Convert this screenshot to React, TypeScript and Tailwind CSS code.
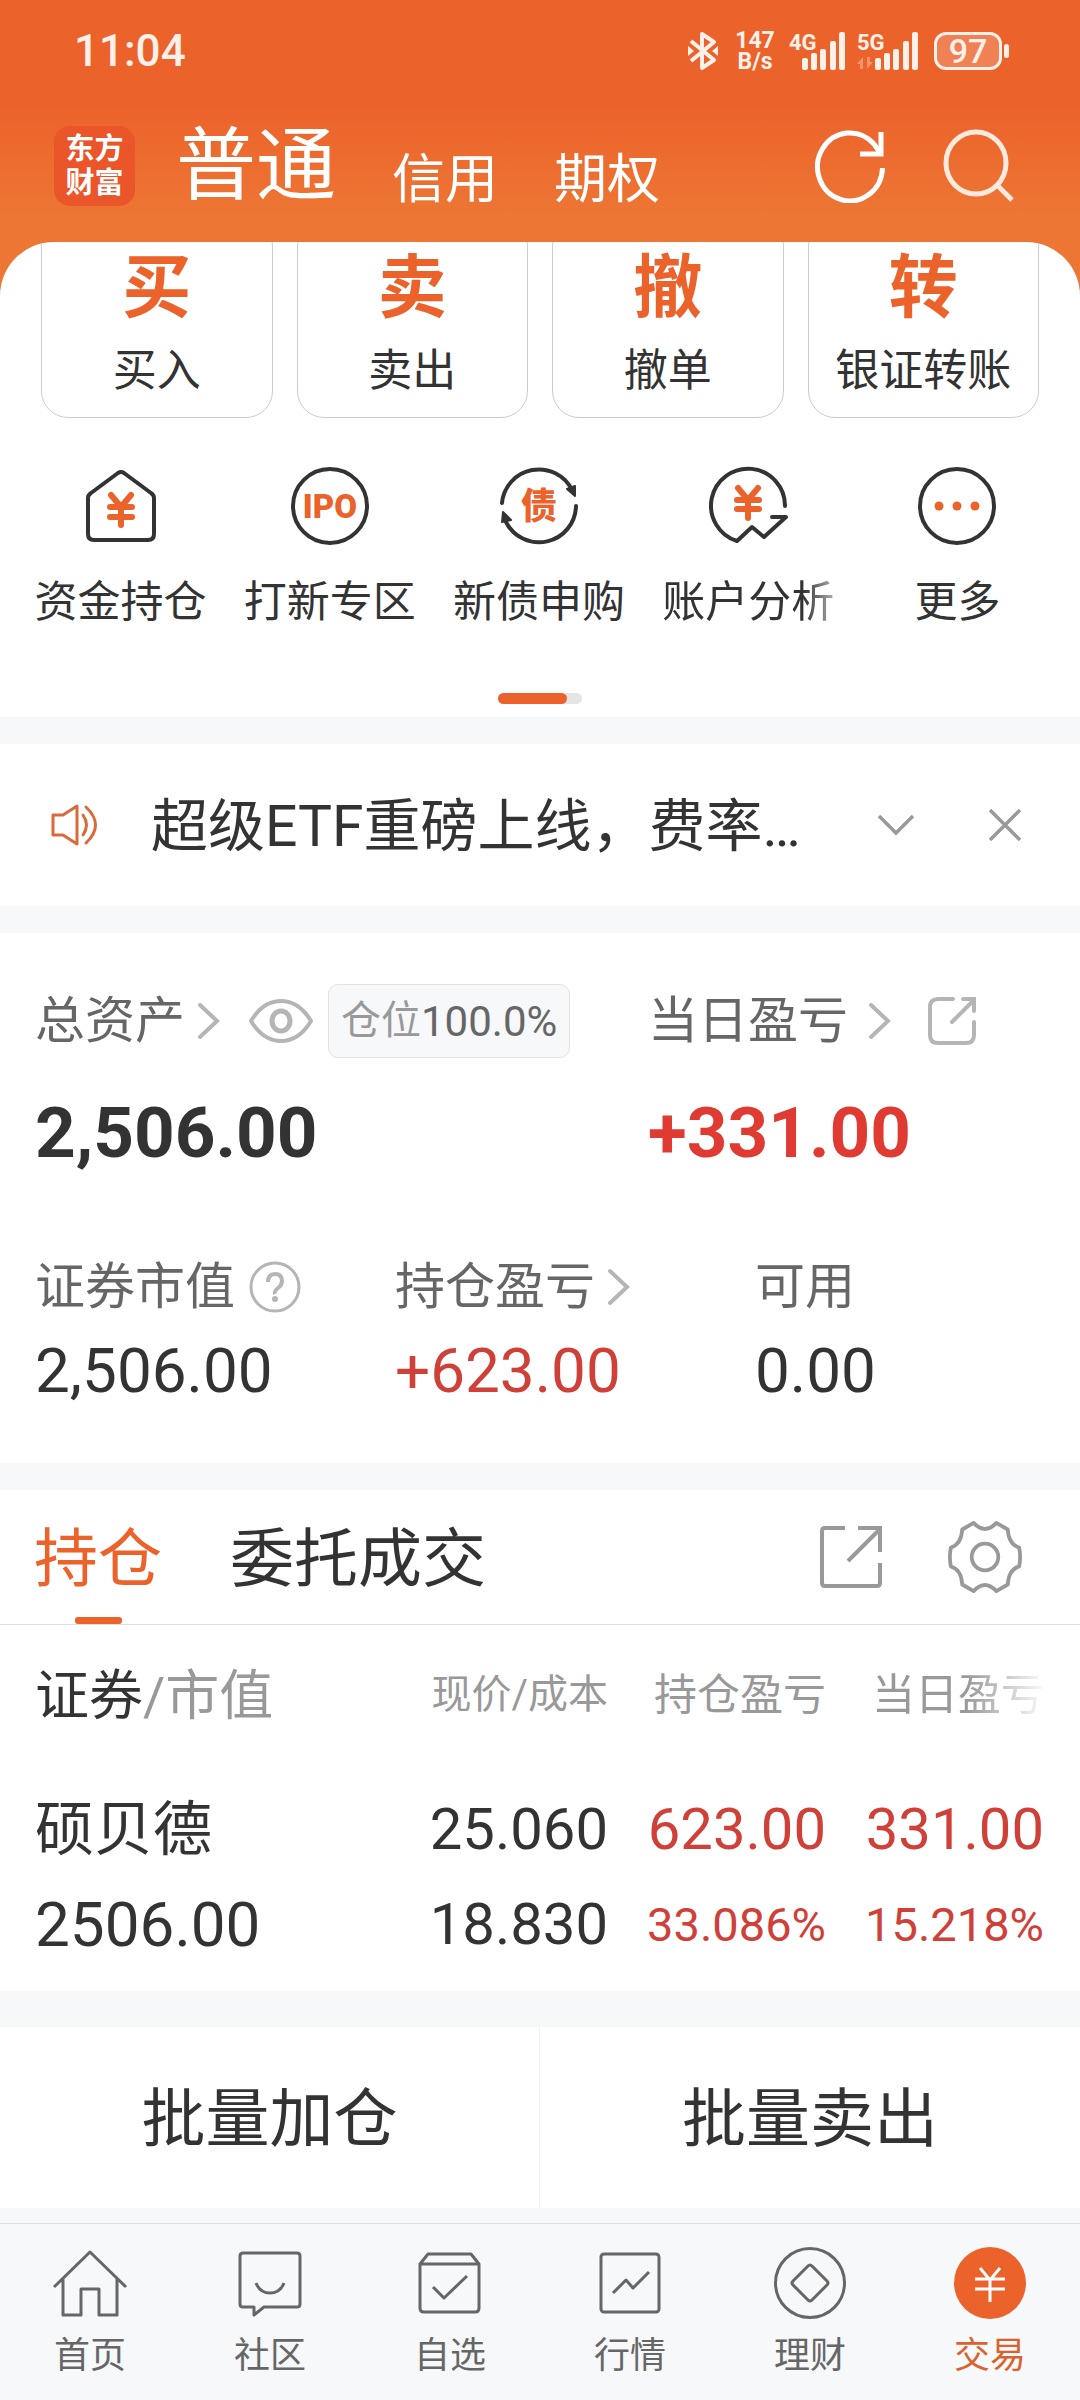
import { useState } from "react";
import type { ReactNode } from "react";
import clsx from "clsx";

const ORANGE = "#ec622b";

const barShapes = [
  { x: 0, y: 27 },
  { x: 9, y: 22 },
  { x: 18, y: 18 },
  { x: 28, y: 10 },
  { x: 37, y: 1 },
];

function SignalBars({ label, roaming }: { label: string; roaming?: boolean }) {
  const offset = roaming ? 18 : 13;

  return (
    <svg width="64" height="40" viewBox="0 0 64 40" fill="#fff1ea" className="overflow-visible" aria-hidden="true">
      <text x="0" y="19" fontSize="22" fontWeight="700">
        {label}
      </text>
      {roaming && (
        <g opacity="0.35">
          <path d="M0 33 6 26v12H3v-5z" />
          <path d="M16 31 10 38V26h3v5z" />
        </g>
      )}
      {barShapes.map((b) => (
        <rect key={b.x} x={offset + b.x} y={b.y} width="6" height={39 - b.y} rx="2" />
      ))}
    </svg>
  );
}

function StatusBar() {
  return (
    <div className="flex h-[102px] items-center justify-between pr-[71px] pl-[74px] text-[#fff1ea]">
      <span className="text-[44px] leading-none font-medium">11:04</span>
      <div className="flex items-center">
        <svg width="30" height="40" viewBox="0 0 30 40" fill="none" stroke="#fff1ea" strokeWidth="4" aria-hidden="true">
          <path d="M3 10 26 29 14 37V3l12 8L3 30" strokeLinejoin="round" />
          <path d="M0 15v10l6-5zM30 15v10l-6-5z" fill="#fff1ea" stroke="none" />
        </svg>
        <div className="ml-4 flex w-[42px] flex-col text-center text-[23px] leading-[21px] font-bold">
          <span>147</span>
          <span>B/s</span>
        </div>
        <div className="ml-[13px] flex gap-1">
          <SignalBars label="4G" />
          <SignalBars label="5G" roaming />
        </div>
        <div className="ml-[13px] flex items-center gap-[2px]">
          <span className="flex h-[38px] w-[68px] items-center justify-center rounded-[12px] border-[3px] border-[#fff1ea] bg-white/20 text-[34px] leading-none font-medium">
            97
          </span>
          <span className="h-[14px] w-[5px] rounded-full bg-[#fff1ea]" />
        </div>
      </div>
    </div>
  );
}

function Header() {
  return (
    <header className="bg-[linear-gradient(180deg,#ec622b_0px,#ec622b_105px,#ed7634_215px)] pb-[66px]">
      <StatusBar />
      <div className="flex h-[128px] items-center pr-[65px] pl-[54px] text-white">
        <div className="w-[81px] rounded-[16px] bg-[#ea5529] py-[6px] text-center text-[29px] leading-[34px] font-bold">
          <div>东方</div>
          <div>财富</div>
        </div>
        <div className="ml-[41px] flex items-end">
          <button className="text-[80px] leading-[100px]">普通</button>
          <button className="ml-[56px] text-[53px] leading-[72px]">信用</button>
          <button className="ml-[56px] text-[53px] leading-[72px]">期权</button>
        </div>
        <button aria-label="刷新" className="ml-auto">
          <svg width="72" height="74" viewBox="0 0 72 74" fill="none" stroke="currentColor" strokeWidth="5">
            <path d="M67.500 39A32.500 34 0 1 1 59 15L66 25" />
            <path d="M66 3v22H45" />
          </svg>
        </button>
        <button aria-label="搜索" className="ml-[56px] text-[#ffe9dc]">
          <svg width="72" height="74" viewBox="0 0 72 74" fill="none" stroke="currentColor" strokeWidth="5">
            <ellipse cx="33" cy="34" rx="30" ry="31" />
            <path d="M54 56 69 71" />
          </svg>
        </button>
      </div>
    </header>
  );
}

const actions = [
  { mark: "买", label: "买入" },
  { mark: "卖", label: "卖出" },
  { mark: "撤", label: "撤单" },
  { mark: "转", label: "银证转账" },
];

function QuickIcon({ children }: { children: ReactNode }) {
  return (
    <svg
      width="80"
      height="80"
      viewBox="0 0 80 80"
      fill="none"
      stroke="#333"
      strokeWidth="4"
      strokeLinecap="round"
      strokeLinejoin="round"
      aria-hidden="true"
    >
      {children}
    </svg>
  );
}

const shortcuts = [
  {
    label: "资金持仓",
    icon: (
      <QuickIcon>
        <path d="M37 7q3-2 6 0l27 20q3 2 3 5v36q0 6-6 6H13q-6 0-6-6V32q0-3 3-5z" />
        <path d="m30 29 10 12 10-12M29 41h22M29 51h22M40 41v18" stroke={ORANGE} strokeWidth="6" />
      </QuickIcon>
    ),
  },
  {
    label: "打新专区",
    icon: (
      <QuickIcon>
        <circle cx="40" cy="40" r="37" />
        <text x="40" y="52" textAnchor="middle" fontSize="33" fontWeight="900" fill={ORANGE} stroke="none">
          IPO
        </text>
      </QuickIcon>
    ),
  },
  {
    label: "新债申购",
    icon: (
      <QuickIcon>
        <path d="M3 37A37 37 0 0 1 73 24M77 40A37 37 0 0 1 7 56" />
        <path d="m68 23 8-3v10zM12 54l-9 2 1-10z" fill="#333" strokeWidth="2" />
        <text x="40" y="53" textAnchor="middle" fontSize="36" fontWeight="900" fill={ORANGE} stroke="none">
          债
        </text>
      </QuickIcon>
    ),
  },
  {
    label: "账户分析",
    fade: true,
    icon: (
      <QuickIcon>
        <path d="M77 40A37 37 0 1 0 29 75L44 61 56 71 78 51H64" />
        <path d="m30 22 10 12 10-12M29 34h22M29 43h22M40 34v18" stroke={ORANGE} strokeWidth="6" />
      </QuickIcon>
    ),
  },
  {
    label: "更多",
    icon: (
      <QuickIcon>
        <circle cx="40" cy="40" r="37" />
        <g fill={ORANGE} stroke="none">
          <circle cx="22" cy="40" r="4.500" />
          <circle cx="40" cy="40" r="4.500" />
          <circle cx="58" cy="40" r="4.500" />
        </g>
      </QuickIcon>
    ),
  },
];

function QuickActions() {
  return (
    <section className="-mt-[54px] overflow-hidden rounded-t-[54px] bg-white">
      <div className="grid grid-cols-4 gap-6 px-[41px]">
        {actions.map((a) => (
          <button
            key={a.label}
            className="-mt-[23px] flex flex-col items-center rounded-[27px] border border-[#ccc] pt-[23px] pb-[14px]"
          >
            <span className="text-[69px] leading-[92px] font-bold text-[#ec622b]">{a.mark}</span>
            <span className="pt-1 text-[44px] leading-[64px] text-[#333]">{a.label}</span>
          </button>
        ))}
      </div>
      <div className="mt-12 grid grid-cols-5 pr-[18px] pl-4">
        {shortcuts.map((s) => (
          <button key={s.label} className="flex flex-col items-center">
            {s.icon}
            <span
              className={clsx(
                "mt-[26px] text-[43px] leading-[60px] whitespace-nowrap text-[#333]",
                s.fade && "[mask-image:linear-gradient(90deg,#000_82%,rgba(0,0,0,0.4))]"
              )}
            >
              {s.label}
            </span>
          </button>
        ))}
      </div>
      <div className="mx-auto mt-[61px] mb-[13px] h-[11px] w-[84px] rounded-full bg-[#e5e5e5]">
        <div className="h-full w-[69px] rounded-full bg-[#ec622b]" />
      </div>
    </section>
  );
}

function Notice() {
  return (
    <section className="flex h-[162px] items-center bg-white pr-[59px] pl-[51px]">
      <svg
        width="48"
        height="42"
        viewBox="0 0 48 42"
        fill="none"
        stroke="#d96a3a"
        strokeWidth="3"
        strokeLinejoin="round"
        strokeLinecap="round"
        aria-hidden="true"
      >
        <path d="M2 11h10L26 2v38l-14-9H2z" />
        <path d="M32 11q7 10 0 20M35 3q19 18 0 36" />
      </svg>
      <p className="ml-[52px] flex-1 truncate pt-1 text-[57px] leading-[80px] text-[#333]">超级ETF重磅上线，费率…</p>
      <button aria-label="展开" className="text-[#999]">
        <svg width="38" height="24" viewBox="0 0 38 24" fill="none" stroke="currentColor" strokeWidth="3.500">
          <path d="m2 3 17 17L36 3" />
        </svg>
      </button>
      <button aria-label="关闭" className="ml-[74px] text-[#999]">
        <svg width="32" height="32" viewBox="0 0 32 32" fill="none" stroke="currentColor" strokeWidth="3.500">
          <path d="m1 1 30 30M31 1 1 31" />
        </svg>
      </button>
    </section>
  );
}

function Chevron() {
  return (
    <svg
      width="24"
      height="40"
      viewBox="0 0 24 40"
      fill="none"
      stroke="#b5b5b5"
      strokeWidth="4"
      strokeLinecap="round"
      aria-hidden="true"
    >
      <path d="m3 4 17 16L3 36" />
    </svg>
  );
}

function Assets() {
  return (
    <section className="bg-white pt-12 pb-14 text-[#333]">
      <div className="flex">
        <div className="w-3/5 pl-[35px]">
          <div className="flex h-[80px] items-center">
            <button className="flex items-center gap-[12px] text-[50px] leading-[70px] text-[#666]">
              总资产
              <Chevron />
            </button>
            <button aria-label="隐藏金额" className="ml-[28px]">
              <svg width="64" height="50" viewBox="0 0 64 50" fill="none" stroke="#b5b5b5" strokeWidth="4">
                <path d="M2 25Q14 5 32 5t30 20Q50 45 32 45T2 25z" strokeLinejoin="round" />
                <ellipse cx="32" cy="25" rx="9" ry="10" strokeWidth="5" />
              </svg>
            </button>
            <span className="ml-[15px] flex h-[74px] items-center rounded-[10px] border border-[#e2e2e4] bg-[#f7f8fa] px-[12px] text-[42px] text-[#666]">
              <span className="text-[40px] text-[#999]">仓位</span>100.0%
            </span>
          </div>
          <p className="pt-[28px] text-[71px] leading-[88px] font-bold">2,506.00</p>
        </div>
        <div>
          <div className="flex h-[80px] items-center">
            <button className="flex items-center gap-[20px] text-[50px] leading-[70px] text-[#666]">
              当日盈亏
              <Chevron />
            </button>
            <button aria-label="分享当日盈亏" className="ml-[36px]">
              <svg
                width="48"
                height="48"
                viewBox="0 0 48 48"
                fill="none"
                stroke="#b5b5b5"
                strokeWidth="4"
                strokeLinecap="round"
              >
                <path d="M25 2H10q-8 0-8 8v28q0 8 8 8h28q8 0 8-8V25M24 25 46 3M35 2h11v12" />
              </svg>
            </button>
          </div>
          <p className="pt-[28px] text-[71px] leading-[88px] font-bold text-[#df3b33]">+331.00</p>
        </div>
      </div>
      <div className="mt-[74px] grid grid-cols-3">
        <div className="pl-[35px]">
          <div className="flex h-[72px] items-center gap-[14px] text-[50px] leading-[70px] text-[#666]">
            证券市值
            <button aria-label="证券市值说明">
              <svg width="52" height="52" viewBox="0 0 52 52" fill="none" stroke="#b5b5b5" strokeWidth="3">
                <circle cx="26" cy="26" r="24" />
                <path d="M19 21q0-8 7-8t7 7q0 4-4 7t-3 6" strokeWidth="4" />
                <circle cx="26" cy="38" r="3" fill="#b5b5b5" stroke="none" />
              </svg>
            </button>
          </div>
          <p className="mt-[12px] text-[62px] leading-[72px]">2,506.00</p>
        </div>
        <div className="pl-[35px]">
          <button className="flex h-[72px] items-center gap-[12px] text-[50px] leading-[70px] text-[#666]">
            持仓盈亏
            <Chevron />
          </button>
          <p className="mt-[12px] text-[62px] leading-[72px] text-[#cf4039]">+623.00</p>
        </div>
        <div className="pl-[35px]">
          <div className="flex h-[72px] items-center text-[50px] leading-[70px] text-[#666]">可用</div>
          <p className="mt-[12px] text-[62px] leading-[72px]">0.00</p>
        </div>
      </div>
    </section>
  );
}

const tabs = ["持仓", "委托成交"];

function Holdings() {
  const [tab, setTab] = useState(tabs[0]);

  return (
    <section className="bg-white text-[#333]">
      <div className="flex h-[135px] items-stretch border-b border-[#dedede] pr-[58px] pl-[34px]">
        <div role="tablist" className="flex gap-[68px]">
          {tabs.map((t) => (
            <button
              key={t}
              role="tab"
              aria-selected={t === tab}
              onClick={() => setTab(t)}
              className={clsx(
                "flex flex-col items-center justify-between text-[64px] leading-[140px]",
                t === tab && "text-[#ec622b]"
              )}
            >
              <span className="h-[127px]">{t}</span>
              {t === tab && <span className="h-[7px] w-[47px] rounded-[3px] bg-[#ec622b]" />}
            </button>
          ))}
        </div>
        <button aria-label="分享持仓" className="ml-auto">
          <svg width="62" height="62" viewBox="0 0 62 62" fill="none" stroke="#999" strokeWidth="4">
            <path d="M25 2H5q-3 0-3 3v52q0 3 3 3h52q3 0 3-3V37M28 35 60 3M38 2h22v24" />
          </svg>
        </button>
        <button aria-label="设置" className="ml-[66px]">
          <svg width="74" height="74" viewBox="-39 -39 78 78" fill="none" stroke="#999" strokeWidth="4" strokeLinejoin="round">
            <path d="M-12-36Q0-23 12-36L24-29Q25-13 36-10 38 0 36 10 25 13 24 29L12 36Q0 23-12 36L-24 29Q-25 13-36 10-38 0-36-10-25-13-24-29z" />
            <circle r="14" />
          </svg>
        </button>
      </div>
      <table className="w-full table-fixed text-right">
        <thead>
          <tr className="h-[138px] text-[#999]">
            <th className="pt-1 pl-[35px] text-left text-[54px] font-normal">
              <span className="text-[#333]">证券</span>/市值
            </th>
            <th className="w-[218px] pt-[2px] text-[40px] font-normal">现价/成本</th>
            <th className="w-[218px] pt-[2px] text-[43px] font-normal">持仓盈亏</th>
            <th className="w-[254px] overflow-hidden pt-[2px] pr-9 text-[43px] font-normal whitespace-nowrap">
              <span className="[mask-image:linear-gradient(90deg,#000_55%,rgba(0,0,0,0.05))]">当日盈亏</span>
            </th>
          </tr>
        </thead>
        <tbody>
          <tr className="text-[58px] leading-[95px]">
            <td className="py-[19px] pl-[35px] text-left">
              <div className="text-[59px]">硕贝德</div>
              <div className="text-[62px]">2506.00</div>
            </td>
            <td>
              <div>25.060</div>
              <div>18.830</div>
            </td>
            <td className="text-[#cf4039]">
              <div>623.00</div>
              <div className="text-[47px]">33.086%</div>
            </td>
            <td className="pr-9 text-[#cf4039]">
              <div>331.00</div>
              <div className="text-[47px]">15.218%</div>
            </td>
          </tr>
        </tbody>
      </table>
    </section>
  );
}

function NavIcon({ children }: { children: ReactNode }) {
  return (
    <svg
      width="80"
      height="80"
      viewBox="0 0 80 80"
      fill="none"
      stroke="#666"
      strokeWidth="3"
      strokeLinejoin="round"
      aria-hidden="true"
    >
      {children}
    </svg>
  );
}

const navItems = [
  {
    label: "首页",
    icon: (
      <NavIcon>
        <path d="M4 42 40 7l36 35M13 34v36h18V44h18v26h18V34" />
      </NavIcon>
    ),
  },
  {
    label: "社区",
    icon: (
      <NavIcon>
        <path d="M13 8h54q3 0 3 3v48q0 3-3 3H34L24 70V62H13q-3 0-3-3V11q0-3 3-3z" />
        <path d="M26 38q4 10 14 10t14-10" />
      </NavIcon>
    ),
  },
  {
    label: "自选",
    icon: (
      <NavIcon>
        <path d="M10 19 18 9h43l8 10v44q0 4-4 4H14q-4 0-4-4zM10 19h59M23 42l11 11 23-22" />
      </NavIcon>
    ),
  },
  {
    label: "行情",
    icon: (
      <NavIcon>
        <rect x="11" y="9" width="58" height="58" rx="3" />
        <path d="m23 48 13-13 7 8 16-16" />
      </NavIcon>
    ),
  },
  {
    label: "理财",
    icon: (
      <NavIcon>
        <circle cx="40" cy="38" r="34.500" />
        <path d="M38 21q2-2 4 0l15 15q2 2 0 4L42 55q-2 2-4 0L23 40q-2-2 0-4z" />
      </NavIcon>
    ),
  },
  {
    label: "交易",
    active: true,
    icon: (
      <NavIcon>
        <circle cx="40" cy="38" r="36" fill={ORANGE} stroke="none" />
        <path d="m30 23 10 12 10-12M25 34h30M25 44h30M40 34v23" stroke="#fff" />
      </NavIcon>
    ),
  },
];

function BottomNav() {
  return (
    <nav className="mt-[15px] grid grid-cols-6 border-t border-[#dedede] bg-[#f7f8fa] pt-[21px] pb-[14px]">
      {navItems.map((n) => (
        <a
          key={n.label}
          href="#"
          className={clsx(
            "flex flex-col items-center gap-px text-[36px] leading-[60px]",
            n.active ? "text-[#d9622f]" : "text-[#666]"
          )}
        >
          {n.icon}
          {n.label}
        </a>
      ))}
    </nav>
  );
}

export default function App() {
  return (
    <div className="min-h-screen bg-[#f7f8fa] font-[Roboto,'Noto_Sans_CJK_SC',sans-serif]">
      <Header />
      <main>
        <QuickActions />
        <div className="mt-[27px] flex flex-col gap-[27px]">
          <Notice />
          <Assets />
          <Holdings />
        </div>
        <div className="mt-9 grid grid-cols-2 divide-x divide-[#f3f3f5] bg-white text-[64px] leading-[177px] text-[#333]">
          <button className="pt-1">批量加仓</button>
          <button className="pt-1">批量卖出</button>
        </div>
      </main>
      <BottomNav />
    </div>
  );
}
